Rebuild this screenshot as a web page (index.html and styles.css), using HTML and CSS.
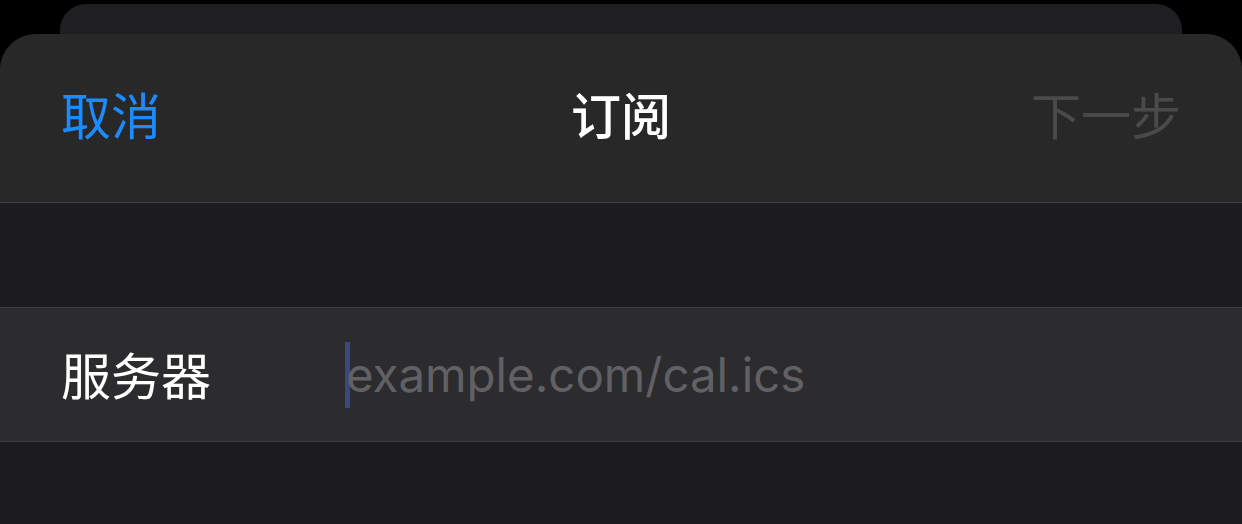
FILE: index.html
```html
<!DOCTYPE html>
<html>

<head>
    <meta charset="utf-8" />
    <title>订阅</title>
    <meta name="viewport" content="width=device-width, initial-scale=1">
    <link rel="stylesheet" href="styles.css">
</head>

<body>
    <div class="stack">
        <div class="card-behind"></div>
        <div class="sheet">
            <div class="nav">
                <span class="nav-btn cancel">取消</span>
                <span class="nav-title">订阅</span>
                <span class="nav-btn next">下一步</span>
            </div>
            <div class="gap"></div>
            <div class="field">
                <span class="field-label">服务器</span>
                <span class="field-input"><span class="caret"></span><span class="placeholder">example.com/cal.ics</span></span>
            </div>
            <div class="rest"></div>
        </div>
    </div>
</body>

</html>
```

FILE: styles.css
```css
html,
body {
    margin: 0;
    height: 100%;
    background: #000;
    overflow: hidden;
}

body {
    font-family: "Inter", "Noto Sans CJK SC", sans-serif;
    color: #fff;
}

.stack {
    position: relative;
    padding-top: 34px;
    height: 100%;
    box-sizing: border-box;
}

/* the sheet underneath peeking out at the top */
.card-behind {
    position: absolute;
    top: 4px;
    left: 60px;
    right: 60px;
    height: 80px;
    background: #1f1f21;
    border-radius: 26px 26px 0 0;
}

.sheet {
    position: relative;
    background: #1c1c1e;
    border-radius: 36px 36px 0 0;
    overflow: hidden;
    height: 100%;
}

.nav {
    display: grid;
    grid-template-columns: 1fr auto 1fr;
    align-items: center;
    box-sizing: border-box;
    height: 169px;
    padding: 0 61px 11px 61px;
    background: #282828;
    border-bottom: 1px solid #3d3d3f;
    font-family: "Noto Sans CJK SC", sans-serif;
    font-size: 50px;
}

.nav-btn {
    line-height: 1;
}

.cancel {
    color: #1a8cff;
    justify-self: start;
}

.nav-title {
    font-weight: 500;
    line-height: 1;
}

.next {
    color: #4a4a4b;
    justify-self: end;
}

.gap {
    height: 104px;
}

.field {
    display: flex;
    align-items: center;
    box-sizing: border-box;
    height: 135px;
    padding: 0 0 4px 61px;
    background: #2c2c2e;
    border-top: 1px solid #3d3d3f;
    border-bottom: 1px solid #3d3d3f;
}

.field-label {
    width: 284px;
    font-family: "Noto Sans CJK SC", sans-serif;
    font-size: 50px;
    line-height: 1;
}

.field-input {
    display: flex;
    align-items: center;
    padding-top: 4px;
}

.caret {
    width: 5px;
    height: 66px;
    background: #3b4a7e;
    margin-right: -4px;
}

.placeholder {
    font-size: 47.4px;
    color: #616165;
}

.rest {
    height: 100px;
}
```
